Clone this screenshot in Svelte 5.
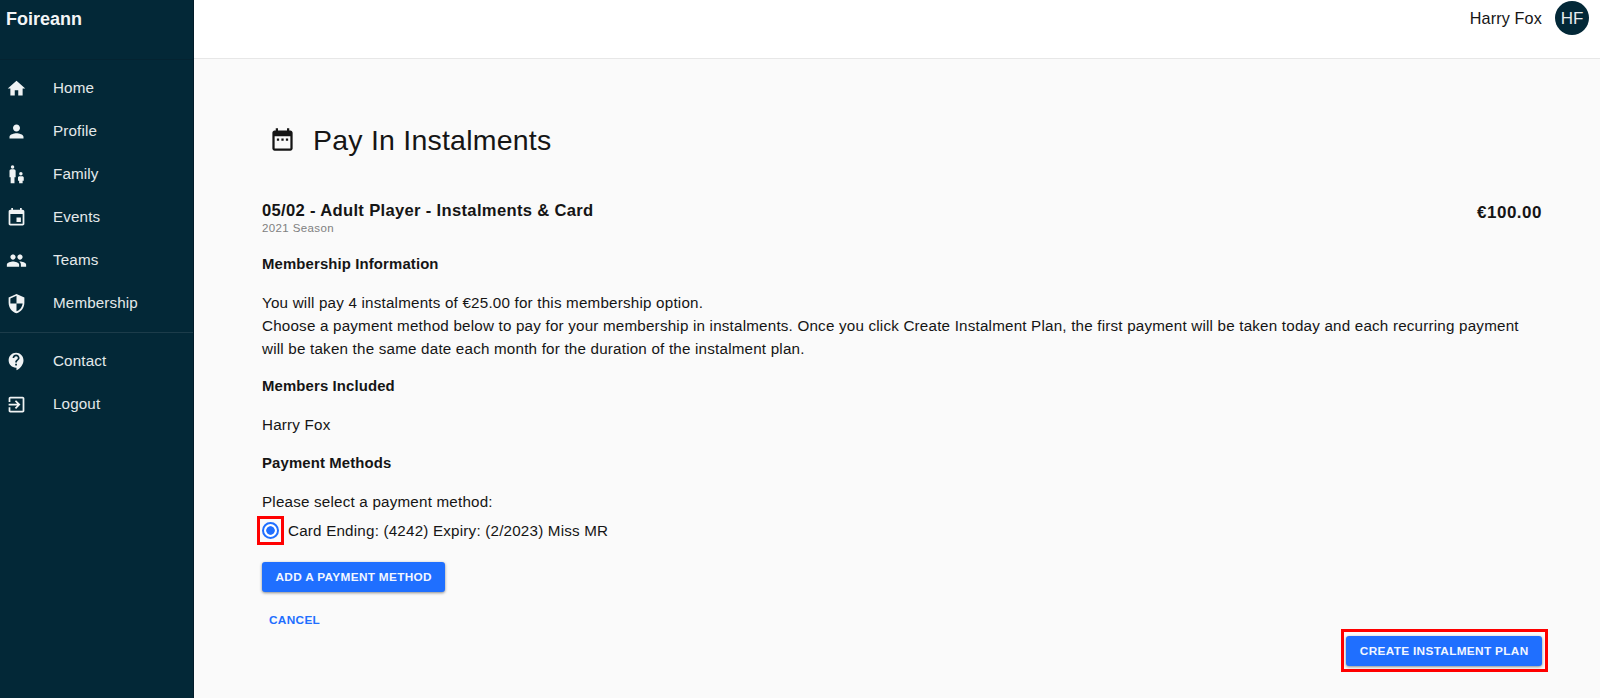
<script lang="ts">
	const mainLinks = [
		{ label: 'Home', icon: 'M10 20v-6h4v6h5v-8h3L12 3 2 12h3v8z' },
		{
			label: 'Profile',
			icon: 'M12 12c2.21 0 4-1.79 4-4s-1.79-4-4-4-4 1.79-4 4 1.79 4 4 4zm0 2c-2.67 0-8 1.34-8 4v2h16v-2c0-2.66-5.33-4-8-4z'
		},
		{
			label: 'Family',
			icon: 'M7.5 1.5a2 2 0 1 1 0 4 2 2 0 0 1 0-4zM6 6h3c1.1 0 2 .9 2 2v7H9.7v7H5.3v-7H4V8c0-1.1.9-2 2-2zM17 9.2a2 2 0 1 1 0 4 2 2 0 0 1 0-4zM15.5 14h3c1 0 1.8.7 1.8 1.6V19H19v3h-4v-3h-1.3v-3.4c0-.9.8-1.6 1.8-1.6z'
		},
		{
			label: 'Events',
			icon: 'M17 12h-5v5h5v-5zM16 1v2H8V1H6v2H5c-1.11 0-1.99.9-1.99 2L3 19c0 1.1.89 2 2 2h14c1.1 0 2-.9 2-2V5c0-1.1-.9-2-2-2h-1V1h-2zm3 18H5V8h14v11z'
		},
		{
			label: 'Teams',
			icon: 'M16 11c1.66 0 2.99-1.34 2.99-3S17.66 5 16 5s-3 1.34-3 3 1.34 3 3 3zm-8 0c1.66 0 2.99-1.34 2.99-3S9.66 5 8 5 5 6.34 5 8s1.34 3 3 3zm0 2c-2.33 0-7 1.17-7 3.5V19h14v-2.5c0-2.33-4.67-3.5-7-3.5zm8 0c-.29 0-.62.02-.97.05 1.16.84 1.97 1.97 1.97 3.45V19h6v-2.5c0-2.33-4.67-3.5-7-3.5z'
		},
		{
			label: 'Membership',
			icon: 'M12 1L3 5v6c0 5.55 3.84 10.74 9 12 5.16-1.26 9-6.45 9-12V5l-9-4zm0 10.99h7c-.53 4.12-3.28 7.79-7 8.94V12H5V6.3l7-3.11v8.8z'
		}
	];
	const otherLinks = [
		{
			label: 'Contact',
			icon: 'M11.5 2C6.81 2 3 5.81 3 10.5S6.81 19 11.5 19h.5v3c4.86-2.34 8-7 8-11.5C20 5.81 16.19 2 11.5 2zm1 14.5h-2v-2h2v2zm0-3.5h-2c0-3.25 3-3 3-5 0-1.1-.9-2-2-2s-2 .9-2 2h-2c0-2.21 1.79-4 4-4s4 1.79 4 4c0 2.5-3 2.75-3 5z'
		},
		{
			label: 'Logout',
			icon: 'M10.09 15.59L11.5 17l5-5-5-5-1.41 1.41L12.67 11H3v2h9.67l-2.58 2.59zM19 3H5c-1.11 0-2 .9-2 2v4h2V5h14v14H5v-4H3v4c0 1.1.89 2 2 2h14c1.1 0 2-.9 2-2V5c0-1.1-.9-2-2-2z'
		}
	];

	let method = 'card-4242';
</script>

{#snippet link(item: any)}
	<a class="link" href="#{item.label.toLowerCase()}">
		<svg viewBox="0 0 24 24"><path d={item.icon} /></svg>
		<span>{item.label}</span>
	</a>
{/snippet}

<div class="app">
	<aside>
		<div class="brand">Foireann</div>
		<nav>
			{#each mainLinks as item}
				{@render link(item)}
			{/each}
		</nav>
		<nav class="other">
			{#each otherLinks as item}
				{@render link(item)}
			{/each}
		</nav>
	</aside>

	<div class="page">
		<header>
			<span class="user">Harry Fox</span>
			<span class="avatar">HF</span>
		</header>

		<main>
			<div class="title">
				<svg viewBox="0 0 24 24">
					<path
						d="M9 11H7v2h2v-2zm4 0h-2v2h2v-2zm4 0h-2v2h2v-2zm2-7h-1V2h-2v2H8V2H6v2H5c-1.11 0-1.99.9-1.99 2L3 20c0 1.1.89 2 2 2h14c1.1 0 2-.9 2-2V6c0-1.1-.9-2-2-2zm0 16H5V9h14v11z"
					/>
				</svg>
				<h1>Pay In Instalments</h1>
			</div>

			<div class="option">
				<div>
					<h2>05/02 - Adult Player - Instalments &amp; Card</h2>
					<div class="season">2021 Season</div>
				</div>
				<div class="price">€100.00</div>
			</div>

			<h3>Membership Information</h3>
			<p>
				You will pay 4 instalments of €25.00 for this membership option.<br />
				Choose a payment method below to pay for your membership in instalments. Once you click Create
				Instalment Plan, the first payment will be taken today and each recurring payment<br />
				will be taken the same date each month for the duration of the instalment plan.
			</p>

			<h3>Members Included</h3>
			<p>Harry Fox</p>

			<h3>Payment Methods</h3>
			<p>Please select a payment method:</p>
			<label class="method">
				<span class="radio-box">
					<input type="radio" name="method" value="card-4242" bind:group={method} />
				</span>
				<span class="card">Card Ending: (4242) Expiry: (2/2023) Miss MR</span>
			</label>

			<button class="primary">Add a payment method</button>
			<button class="cancel">Cancel</button>

			<div class="actions">
				<button class="primary">Create instalment plan</button>
			</div>
		</main>
	</div>
</div>

<style>
	:global(body) {
		margin: 0;
		overflow: hidden;
	}

	.app {
		display: flex;
		height: 698px;
		background: #fafafa;
		color: #151515;
		font-family: 'Liberation Sans', Arial, sans-serif;
		font-size: 15.2px;
		line-height: 22.8px;
		letter-spacing: 0.14px;
	}

	aside {
		box-sizing: border-box;
		flex: none;
		width: 194px;
		background: #032837;
		border-right: 1px solid #021c2a;
		color: #e4e8ea;
	}
	.brand {
		box-sizing: border-box;
		height: 60px;
		padding: 8px 6px;
		border-bottom: 1px solid #042331;
		font-size: 18px;
		font-weight: bold;
		letter-spacing: 0;
		color: #f3f5f6;
	}
	nav {
		padding: 7px 0;
	}
	.other {
		border-top: 1px solid #1c3c4a;
	}
	.link {
		display: flex;
		align-items: center;
		gap: 27px;
		height: 43px;
		padding-left: 5.5px;
		color: inherit;
		text-decoration: none;
	}
	.link svg {
		width: 21px;
		height: 21px;
		margin: 0 -0.5px 1px 0;
		fill: #f0f3f4;
	}

	.page {
		flex: 1;
		min-width: 0;
	}
	header {
		box-sizing: border-box;
		display: flex;
		justify-content: flex-end;
		gap: 13px;
		height: 59px;
		padding: 1px 11px 0 0;
		border-bottom: 1px solid #e7e7e7;
		background: #fff;
	}
	.user {
		font-size: 16.2px;
		line-height: 35px;
	}
	.avatar {
		width: 34px;
		height: 34px;
		border-radius: 50%;
		background: #032837;
		color: #e8ecee;
		font-size: 17px;
		line-height: 35px;
		text-align: center;
		letter-spacing: 0;
	}

	main {
		padding: 61px 58px 0 68px;
	}
	.title {
		display: flex;
		align-items: center;
		gap: 17px;
		height: 40px;
		padding-left: 7px;
	}
	.title svg {
		width: 27px;
		height: 27px;
		margin-bottom: 1px;
		fill: #151515;
	}
	h1 {
		margin: 0;
		font-size: 28.5px;
		font-weight: normal;
		line-height: 40px;
		letter-spacing: 0.22px;
	}

	.option {
		display: flex;
		justify-content: space-between;
		height: 54px;
		margin-top: 39px;
	}
	h2,
	.price {
		margin: 0;
		font-size: 16.6px;
		font-weight: bold;
		line-height: 24px;
		letter-spacing: 0.32px;
	}
	.price {
		padding-top: 2px;
		font-size: 17px;
		letter-spacing: 0.5px;
	}
	.season {
		color: #808080;
		font-size: 11.5px;
		line-height: 11px;
		letter-spacing: 0.38px;
	}

	h3 {
		margin: 0;
		font-size: 14.9px;
		line-height: 22.8px;
		letter-spacing: 0.13px;
	}
	p {
		margin: 16.2px 0 14.8px;
		letter-spacing: 0.2px;
	}

	.method {
		display: flex;
		align-items: center;
		gap: 4px;
		margin: -12px 0 17px -5px;
		letter-spacing: 0.2px;
	}
	.card {
		padding-top: 2px;
	}
	.radio-box {
		display: flex;
		align-items: center;
		justify-content: center;
		box-sizing: border-box;
		width: 27px;
		height: 29px;
		border: 3px solid #f00;
	}
	input {
		appearance: none;
		width: 17px;
		height: 17px;
		margin: 0;
		border: 2px solid #1f6fff;
		border-radius: 50%;
		background: radial-gradient(circle, #1f6fff 3.9px, #fff 4.6px);
		box-sizing: border-box;
	}

	button {
		display: block;
		height: 30px;
		border: 0;
		font-family: inherit;
		font-size: 11.8px;
		font-weight: bold;
		letter-spacing: 0.33px;
		text-transform: uppercase;
		white-space: nowrap;
	}
	.primary {
		padding: 0 13.5px;
		border-radius: 3px;
		background: #1f6fff;
		color: #f2f6ff;
		box-shadow: 0 1px 3px rgba(0, 0, 0, 0.45);
	}
	.cancel {
		margin-top: 13px;
		padding: 0 7px;
		background: none;
		color: #1f6fff;
	}
	.actions {
		width: fit-content;
		box-sizing: border-box;
		margin: -6px -6px 0 auto;
		padding: 4px 3px 3px 2px;
		border: 3px solid #f00;
	}
</style>
